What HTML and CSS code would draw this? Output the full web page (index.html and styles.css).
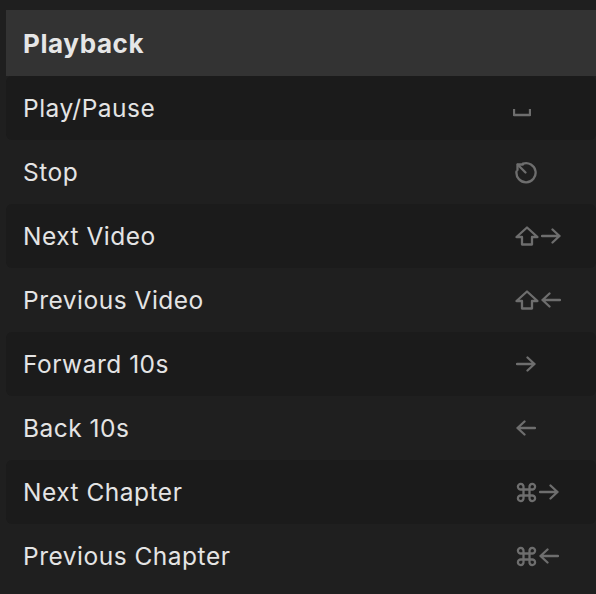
FILE: index.html
```html
<!DOCTYPE html>
<html>
<head>
<meta charset="utf-8">
<link rel="stylesheet" href="styles.css">
</head>
<body>
<div class="panel">
  <div class="header">Playback</div>
  <div class="row odd">
    <span class="label">Play/Pause</span>
    <span class="keys"><svg class="k-space" width="18" height="8" viewBox="0 0 18 8"><polyline points="1,0 1,6 17,6 17,0"/></svg></span>
  </div>
  <div class="row">
    <span class="label">Stop</span>
    <span class="keys"><svg class="k-stop" width="24" height="24" viewBox="0 0 24 24"><path d="M9 2.6 A9.6 9.6 0 1 1 2.5 10.5"/><path d="M11.5 11.5 L3.8 3.8"/><path d="M3.5 9 V3.5 H9"/></svg></span>
  </div>
  <div class="row odd">
    <span class="label">Next Video</span>
    <span class="keys"><svg class="k-shift" width="24" height="20" viewBox="0 0 24 20"><path d="M12 1.5 L1.5 11 H7 V18.5 H17 V11 H22.5 Z"/></svg><svg class="k-arrow" width="20" height="16" viewBox="0 0 20 16"><path d="M1 8 H18.5 M11.5 1.5 L18.5 8 L11.5 14.5"/></svg></span>
  </div>
  <div class="row">
    <span class="label">Previous Video</span>
    <span class="keys"><svg class="k-shift" width="24" height="20" viewBox="0 0 24 20"><path d="M12 1.5 L1.5 11 H7 V18.5 H17 V11 H22.5 Z"/></svg><svg class="k-arrow" width="20" height="16" viewBox="0 0 20 16"><path d="M19 8 H1.5 M8.5 1.5 L1.5 8 L8.5 14.5"/></svg></span>
  </div>
  <div class="row odd">
    <span class="label">Forward 10s</span>
    <span class="keys"><svg class="k-arrow" width="20" height="16" viewBox="0 0 20 16"><path d="M1 8 H18.5 M11.5 1.5 L18.5 8 L11.5 14.5"/></svg></span>
  </div>
  <div class="row">
    <span class="label">Back 10s</span>
    <span class="keys"><svg class="k-arrow" width="20" height="16" viewBox="0 0 20 16"><path d="M19 8 H1.5 M8.5 1.5 L1.5 8 L8.5 14.5"/></svg></span>
  </div>
  <div class="row odd">
    <span class="label">Next Chapter</span>
    <span class="keys"><svg class="k-cmd" width="21" height="21" viewBox="0 0 21 21"><path d="M7.5 7.5 V5 A2.8 2.8 0 1 0 5 7.5 H16 A2.8 2.8 0 1 0 13.5 5 V16 A2.8 2.8 0 1 0 16 13.5 H5 A2.8 2.8 0 1 0 7.5 16 Z"/></svg><svg class="k-arrow" width="20" height="16" viewBox="0 0 20 16"><path d="M1 8 H18.5 M11.5 1.5 L18.5 8 L11.5 14.5"/></svg></span>
  </div>
  <div class="row">
    <span class="label">Previous Chapter</span>
    <span class="keys"><svg class="k-cmd" width="21" height="21" viewBox="0 0 21 21"><path d="M7.5 7.5 V5 A2.8 2.8 0 1 0 5 7.5 H16 A2.8 2.8 0 1 0 13.5 5 V16 A2.8 2.8 0 1 0 16 13.5 H5 A2.8 2.8 0 1 0 7.5 16 Z"/></svg><svg class="k-arrow" width="20" height="16" viewBox="0 0 20 16"><path d="M19 8 H1.5 M8.5 1.5 L1.5 8 L8.5 14.5"/></svg></span>
  </div>
</div>
</body>
</html>
```
FILE: styles.css
```css
html, body {
  margin: 0;
  padding: 0;
  background: #1f1f1f;
  width: 596px;
  height: 594px;
  overflow: hidden;
}
.panel {
  padding: 10px 0 0 6px;
  font-family: Inter, "Noto Sans", sans-serif;
  color: #e4e4e4;
}
.header {
  height: 66px;
  display: flex;
  align-items: center;
  padding-left: 17px;
  background: #333333;
  font-size: 26px;
  font-weight: 700;
  letter-spacing: 0.6px;
  color: #e6e6e6;
}
.row {
  height: 64px;
  display: flex;
  align-items: center;
  padding-left: 17px;
  border-radius: 6px;
  font-size: 24.5px;
  letter-spacing: 0.5px;
}
.row.odd {
  background: #1b1b1b;
}
.label {
  flex: 1;
}
.keys {
  width: 80px;
  display: flex;
  align-items: center;
  gap: 2px;
}
.keys svg {
  fill: none;
  stroke: #6e6e6e;
  stroke-width: 2.3;
  stroke-linejoin: round;
  stroke-linecap: round;
}
.k-space {
  margin-left: -3px;
  margin-top: 10px;
  stroke-linecap: butt;
  stroke-linejoin: miter;
}
.k-stop {
  margin-left: -2px;
  margin-top: 1px;
}
.k-shift {
  margin-left: -1px;
}
```
